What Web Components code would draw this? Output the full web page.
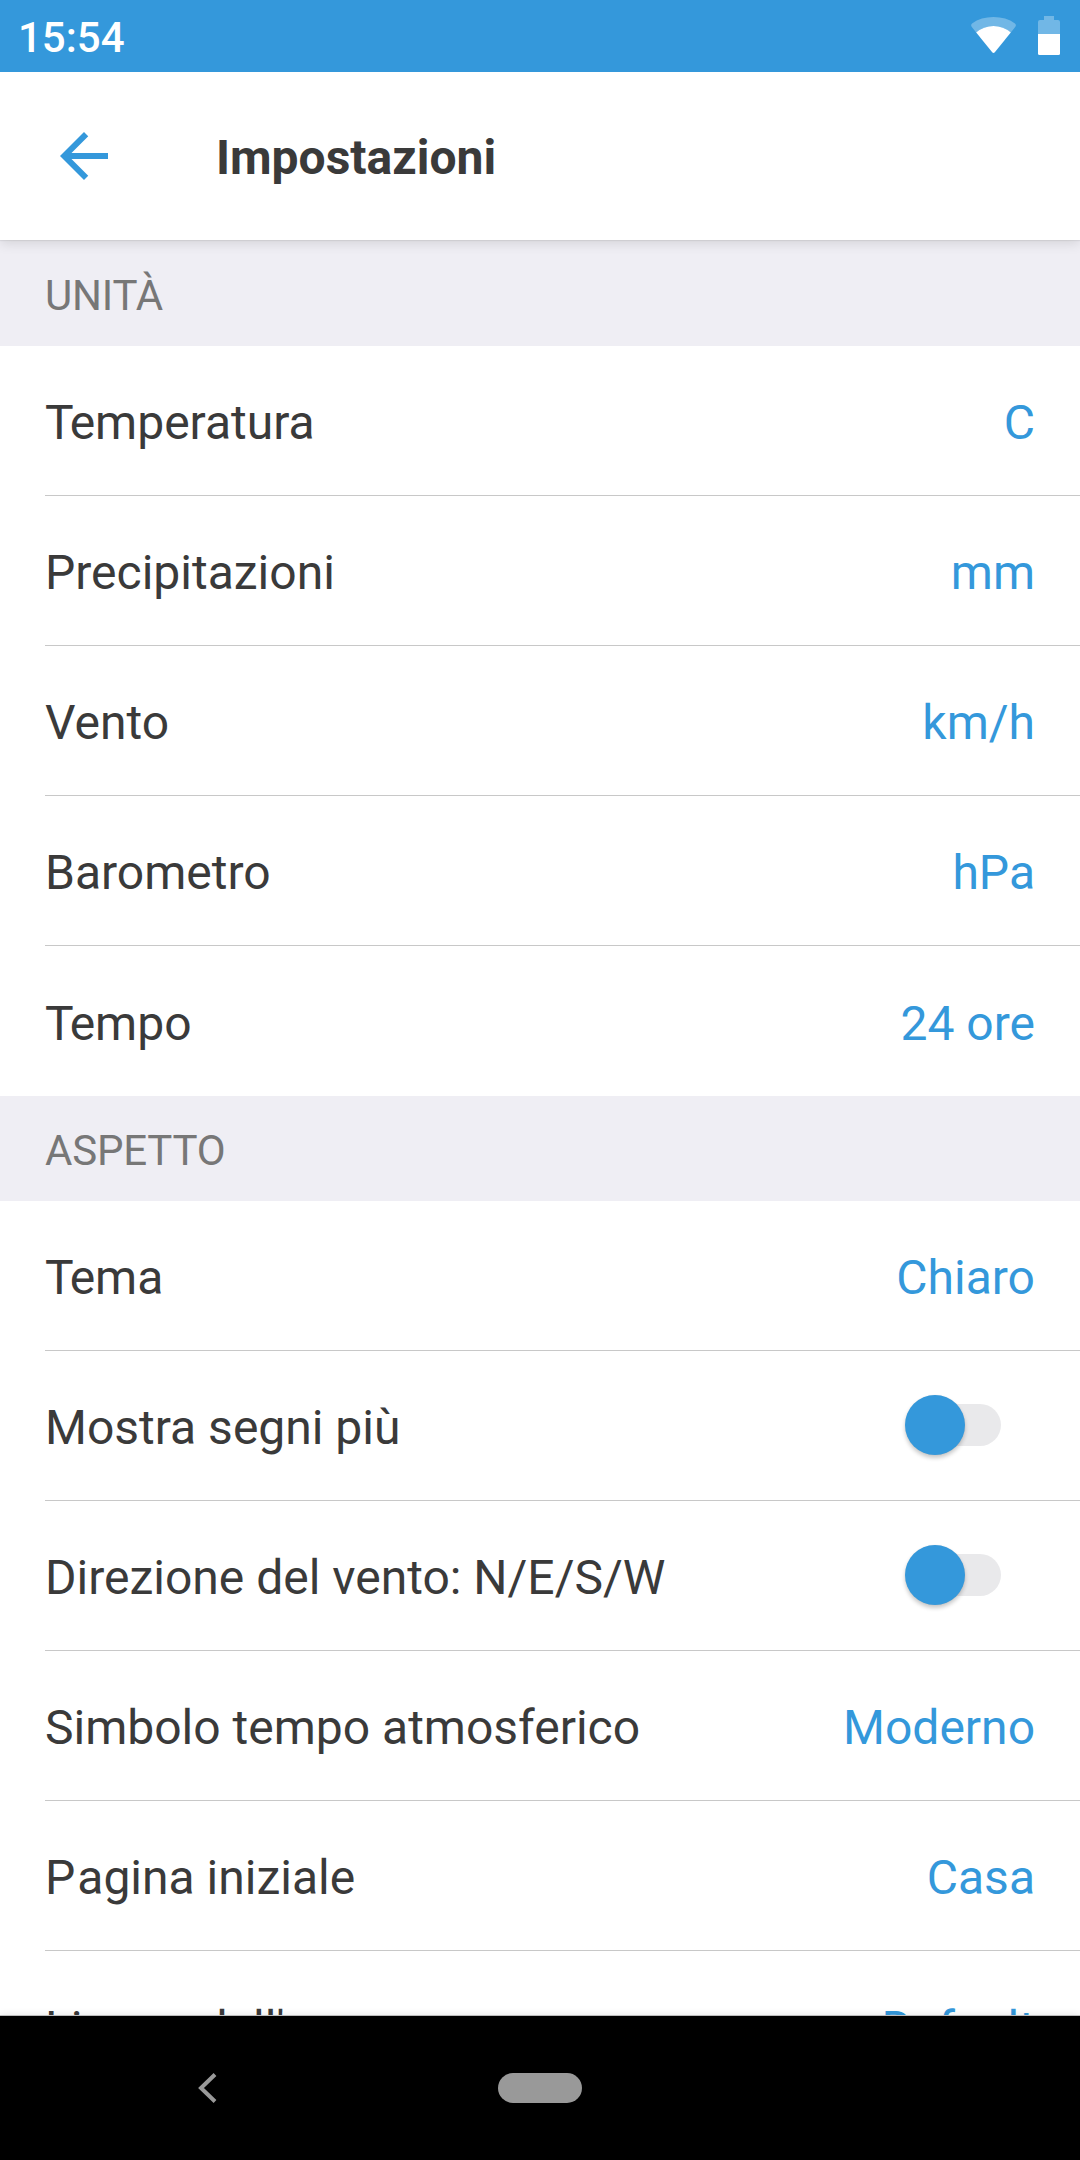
<!DOCTYPE html>
<html lang="it">
<head>
<meta charset="utf-8">
<title>Impostazioni</title>
<style>
  html, body {
    margin: 0;
    height: 100%;
  }
  body {
    font-family: Roboto, sans-serif;
    color: #3a3a3a;
    background: #fff;
    overflow: hidden;
  }
</style>
</head>
<body>
<settings-app></settings-app>

<script>
class StatusBar extends HTMLElement {
  constructor() {
    super();
    this.attachShadow({ mode: 'open' });
  }

  connectedCallback() {
    this.shadowRoot.innerHTML = `
      <style>
        :host {
          display: flex;
          flex: none;
          justify-content: space-between;
          height: 72px;
          background: #3498db;
          color: #fff;
          position: relative;
          z-index: 2;
        }
        .time {
          padding-left: 18px;
          font-size: 42px;
          font-weight: 500;
          line-height: 75px;
        }
        svg {
          display: block;
        }
      </style>
      <span class="time">${this.getAttribute('time')}</span>
      <svg width="120" height="72" viewBox="960 0 120 72" fill="#fff">
        <path opacity=".3" d="M971.6 26.8Q970.3 24.8 972 23.4Q981 17 993.5 17Q1006 17 1015 23.4Q1016.8 24.8 1015.4 26.8L1010.6 32.8Q1003.5 26 993.5 26Q983.5 26 976.4 32.8Z"/>
        <path d="M976.2 32.6Q983.5 26 993.5 26Q1003.5 26 1010.8 32.6L994.8 52.2Q993.5 53.6 992.2 52.2Z"/>
        <path opacity=".3" d="M1044 16h10v4h4q2 0 2 2v12h-22v-12q0-2 2-2h4z"/>
        <path d="M1038 34h22v19.500q0 1.500-1.500 1.500h-19q-1.500 0-1.500-1.500z"/>
      </svg>
    `;
  }
}

class AppHeader extends HTMLElement {
  constructor() {
    super();
    this.attachShadow({ mode: 'open' });
  }

  connectedCallback() {
    this.shadowRoot.innerHTML = `
      <style>
        :host {
          display: flex;
          flex: none;
          align-items: center;
          gap: 96px;
          height: 168px;
          padding-left: 48px;
          background: #fff;
          box-sizing: border-box;
          position: relative;
          z-index: 1;
          box-shadow: 0 1px 1px rgba(0, 0, 0, .06), 0 3px 12px rgba(0, 0, 0, .12);
        }
        h1 {
          margin: 0;
          padding-top: 3px;
          font-size: 48px;
          font-weight: 700;
          line-height: 56px;
        }
      </style>
      <svg width="72" height="72" viewBox="0 0 24 24" fill="#3498db">
        <path d="M20 11H7.830l5.590-5.590L12 4l-8 8 8 8 1.410-1.410L7.830 13H20v-2z"/>
      </svg>
      <h1><slot></slot></h1>
    `;
  }
}

class SettingsSection extends HTMLElement {
  constructor() {
    super();
    this.attachShadow({ mode: 'open' });
  }

  connectedCallback() {
    this.shadowRoot.innerHTML = `
      <style>
        :host {
          display: block;
        }
        h2 {
          margin: 0;
          padding: 2px 45px 0;
          height: 105px;
          box-sizing: border-box;
          background: #efeef4;
          color: #777;
          font-size: 42px;
          font-weight: 400;
          letter-spacing: -.2px;
          line-height: 105px;
          text-transform: uppercase;
        }
        ::slotted(settings-row:last-child) {
          --divider: none;
        }
      </style>
      <h2>${this.getAttribute('heading')}</h2>
      <slot></slot>
    `;
  }
}

class SettingsRow extends HTMLElement {
  constructor() {
    super();
    this.attachShadow({ mode: 'open' });
  }

  connectedCallback() {
    this.shadowRoot.innerHTML = `
      <style>
        :host {
          display: flex;
          align-items: center;
          justify-content: space-between;
          height: 150px;
          margin-left: 45px;
          padding-right: 45px;
          box-sizing: border-box;
          border-bottom: var(--divider, 1px solid #c8c8c8);
          font-size: 48px;
          line-height: 56px;
        }
        .label, .value {
          padding-top: 5px;
          white-space: nowrap;
        }
        /* pair kerning of the capital */
        :host([label^="Te"]) .label::first-letter {
          letter-spacing: -4px;
        }
        :host([label^="Pa"]) .label::first-letter {
          letter-spacing: 2px;
        }
        .value {
          color: #3498db;
        }
      </style>
      <span class="label">${this.getAttribute('label')}</span>
      ${this.hasAttribute('value') ? `<span class="value">${this.getAttribute('value')}</span>` : '<slot></slot>'}
    `;
  }
}

class ToggleSwitch extends HTMLElement {
  constructor() {
    super();
    this.attachShadow({ mode: 'open' });
  }

  connectedCallback() {
    this.shadowRoot.innerHTML = `
      <style>
        :host {
          display: flex;
          align-items: center;
          width: 91px;
          height: 42px;
          margin: 0 34px 1px 0;
          border-radius: 21px;
          background: #e9e9eb;
        }
        .thumb {
          flex: none;
          width: 60px;
          height: 60px;
          margin-left: -5px;
          border-radius: 50%;
          background: #3498db;
          box-shadow: 0 3px 4px rgba(0, 0, 0, .22), 0 0 1px rgba(0, 0, 0, .1);
        }
      </style>
      <span class="thumb"></span>
    `;
  }
}

class NavigationBar extends HTMLElement {
  constructor() {
    super();
    this.attachShadow({ mode: 'open' });
  }

  connectedCallback() {
    this.shadowRoot.innerHTML = `
      <style>
        :host {
          display: grid;
          flex: none;
          grid-template-columns: 1fr 84px 1fr;
          align-items: center;
          height: 145px;
          box-sizing: border-box;
          border-top: 1px solid #bcbcbc;
          background: #000;
          position: relative;
          box-shadow: 0 0 8px rgba(0, 0, 0, .1);
        }
        svg {
          display: block;
          margin-left: 190px;
        }
        .home {
          height: 30px;
          border-radius: 15px;
          background: #999;
        }
      </style>
      <svg width="36" height="36" viewBox="0 0 36 36" fill="none" stroke="#999" stroke-width="4">
        <path d="M25 4.500L11 18l14 13.500"/>
      </svg>
      <span class="home"></span>
    `;
  }
}

class SettingsApp extends HTMLElement {
  constructor() {
    super();
    this.attachShadow({ mode: 'open' });
  }

  connectedCallback() {
    this.shadowRoot.innerHTML = `
      <style>
        :host {
          display: flex;
          flex-direction: column;
          height: 100vh;
        }
        main {
          flex: 1;
          min-height: 0;
          padding-top: 1px;
          background: #efeef4;
          overflow: hidden;
        }
        settings-section {
          background: #fff;
        }
      </style>
      <status-bar time="15:54"></status-bar>
      <app-header>Impostazioni</app-header>
      <main>
        <settings-section heading="Unità">
          <settings-row label="Temperatura" value="C"></settings-row>
          <settings-row label="Precipitazioni" value="mm"></settings-row>
          <settings-row label="Vento" value="km/h"></settings-row>
          <settings-row label="Barometro" value="hPa"></settings-row>
          <settings-row label="Tempo" value="24 ore"></settings-row>
        </settings-section>
        <settings-section heading="Aspetto">
          <settings-row label="Tema" value="Chiaro"></settings-row>
          <settings-row label="Mostra segni più"><toggle-switch></toggle-switch></settings-row>
          <settings-row label="Direzione del vento: N/E/S/W"><toggle-switch></toggle-switch></settings-row>
          <settings-row label="Simbolo tempo atmosferico" value="Moderno"></settings-row>
          <settings-row label="Pagina iniziale" value="Casa"></settings-row>
          <settings-row label="Lingua dell'app" value="Default"></settings-row>
        </settings-section>
      </main>
      <navigation-bar></navigation-bar>
    `;
  }
}

customElements.define('status-bar', StatusBar);
customElements.define('app-header', AppHeader);
customElements.define('settings-section', SettingsSection);
customElements.define('settings-row', SettingsRow);
customElements.define('toggle-switch', ToggleSwitch);
customElements.define('navigation-bar', NavigationBar);
customElements.define('settings-app', SettingsApp);
</script>
</body>
</html>
